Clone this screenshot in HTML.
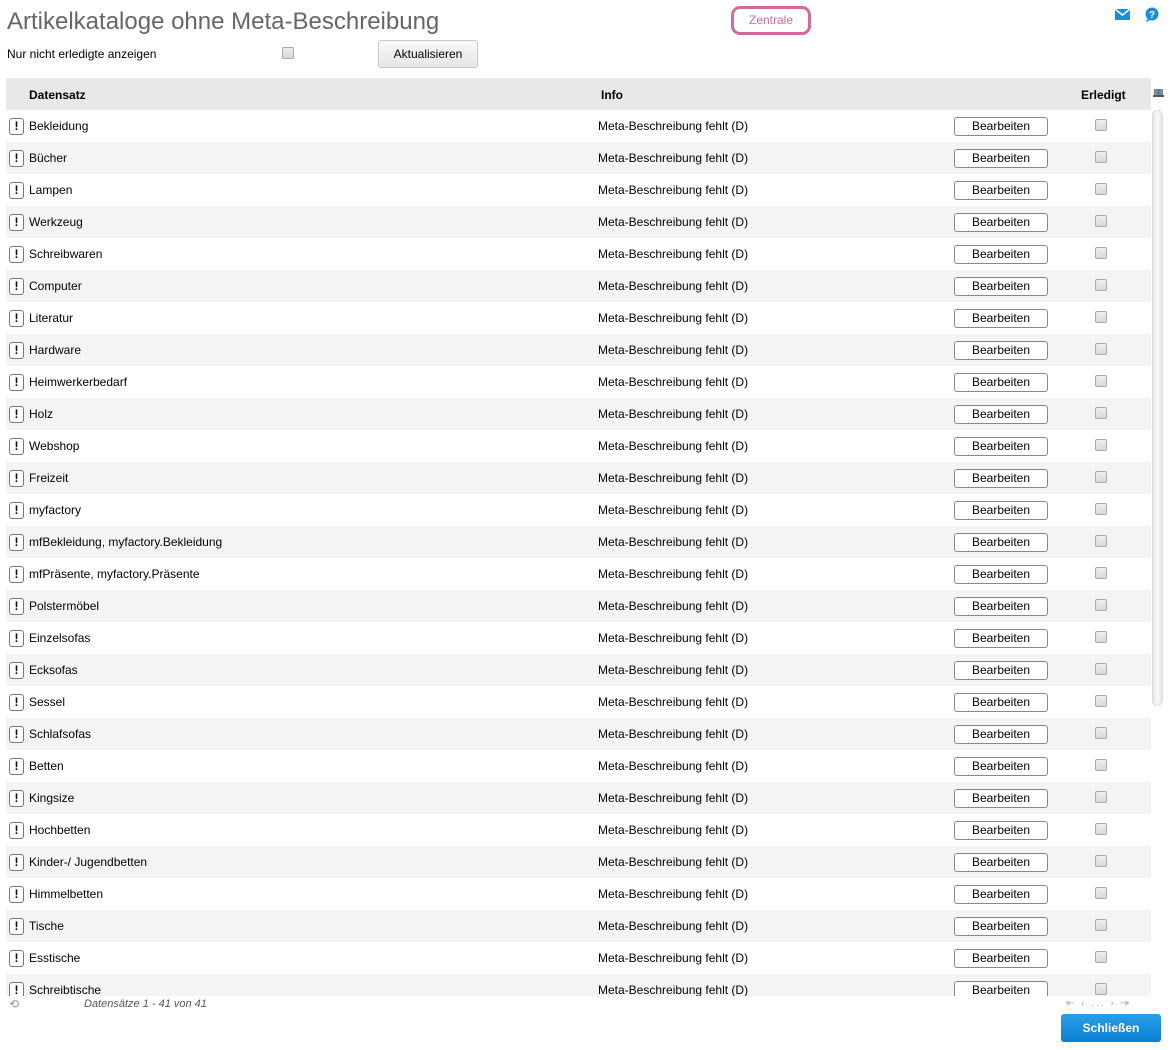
<!DOCTYPE html>
<html><head><meta charset="utf-8"><style>
*{box-sizing:border-box;margin:0;padding:0}
body{width:1176px;height:1050px;background:#fff;font-family:"Liberation Sans",Arial,sans-serif;font-size:12px;color:#000;position:relative;overflow:hidden}
.abs{position:absolute}
h1{position:absolute;left:7px;top:8px;font-size:24px;font-weight:normal;color:#666;letter-spacing:0}
.zen{left:731px;top:6px;width:80px;height:29px;border:3px solid #d06a9c;border-radius:9px;color:#d06a9c;text-align:center;line-height:23px;font-size:12px}
.cb{width:12px;height:12px;border:1px solid #aaa;border-radius:2px;background:linear-gradient(#eee,#d8d8d8)}
.akt{left:378px;top:40px;width:100px;height:28px;border:1px solid #c8c8c8;border-radius:3px;background:linear-gradient(#f8f8f8,#e6e6e6);text-align:center;line-height:26px}
.hdr{left:6px;top:78px;width:1145px;height:32px;background:#e8e8e8;font-weight:bold}
.hdr span{position:absolute;top:10px}
#rows{left:6px;top:110px;width:1145px;height:886px;overflow:hidden}
.r{position:relative;height:32px}
.r:nth-child(even){background:#f4f4f4}
.r .i{position:absolute;left:3px;top:8px;width:15px;height:17px;border:1px solid #777;border-radius:3px;background:#fff;font-weight:bold;text-align:center;line-height:15px;font-size:12px}
.r .n{position:absolute;left:23px;top:9px}
.r .f{position:absolute;left:592px;top:9px}
.r .b{position:absolute;left:948px;top:7px;width:94px;height:19px;border:1px solid #888;border-radius:3px;background:#fff;text-align:center;line-height:17px}
.r .cb{position:absolute;left:1089px;top:9px}
.sb{left:1152px;top:110px;width:11px;height:596px;border-radius:6px;background:linear-gradient(90deg,#e6e6e6,#fafafa,#e6e6e6);border:1px solid #ddd}
.sch{left:1061px;top:1014px;width:100px;height:28px;background:linear-gradient(#2a9ee6,#0a7fd0);border-radius:3px;color:#fff;font-weight:bold;text-align:center;line-height:28px}
</style></head><body>
<h1>Artikelkataloge ohne Meta-Beschreibung</h1>
<div class="abs zen">Zentrale</div>
<svg class="abs" style="left:1115px;top:9px" width="15" height="11" viewBox="0 0 15 11"><rect width="15" height="11" fill="#1a8fd8"/><path d="M0 0L7.5 6L15 0" stroke="#fff" stroke-width="1.5" fill="none"/></svg>
<svg class="abs" style="left:1144px;top:7px" width="16" height="16" viewBox="0 0 16 16"><circle cx="8" cy="7" r="6.5" fill="#1a8fd8"/><path d="M3 12L2 15L6 13Z" fill="#1a8fd8"/><text x="8" y="11" font-size="10" font-weight="bold" fill="#fff" text-anchor="middle" font-family="Liberation Sans">?</text></svg>
<div class="abs" style="left:7px;top:47px">Nur nicht erledigte anzeigen</div>
<div class="abs cb" style="left:282px;top:47px"></div>
<div class="abs akt">Aktualisieren</div>
<div class="abs hdr"><span style="left:23px">Datensatz</span><span style="left:595px">Info</span><span style="left:1075px">Erledigt</span></div>
<svg class="abs" style="left:1153px;top:88px" width="11" height="10" viewBox="0 0 11 10"><rect x="0" y="7" width="11" height="2" fill="#555"/><rect x="1" y="1" width="9" height="6" fill="#888"/><path d="M5.5 1L5.5 7" stroke="#1a8fd8" stroke-width="2"/></svg>
<div class="abs" id="rows">
<div class="r"><div class="i">!</div><div class="n">Bekleidung</div><div class="f">Meta-Beschreibung fehlt (D)</div><div class="b">Bearbeiten</div><div class="cb"></div></div>
<div class="r"><div class="i">!</div><div class="n">Bücher</div><div class="f">Meta-Beschreibung fehlt (D)</div><div class="b">Bearbeiten</div><div class="cb"></div></div>
<div class="r"><div class="i">!</div><div class="n">Lampen</div><div class="f">Meta-Beschreibung fehlt (D)</div><div class="b">Bearbeiten</div><div class="cb"></div></div>
<div class="r"><div class="i">!</div><div class="n">Werkzeug</div><div class="f">Meta-Beschreibung fehlt (D)</div><div class="b">Bearbeiten</div><div class="cb"></div></div>
<div class="r"><div class="i">!</div><div class="n">Schreibwaren</div><div class="f">Meta-Beschreibung fehlt (D)</div><div class="b">Bearbeiten</div><div class="cb"></div></div>
<div class="r"><div class="i">!</div><div class="n">Computer</div><div class="f">Meta-Beschreibung fehlt (D)</div><div class="b">Bearbeiten</div><div class="cb"></div></div>
<div class="r"><div class="i">!</div><div class="n">Literatur</div><div class="f">Meta-Beschreibung fehlt (D)</div><div class="b">Bearbeiten</div><div class="cb"></div></div>
<div class="r"><div class="i">!</div><div class="n">Hardware</div><div class="f">Meta-Beschreibung fehlt (D)</div><div class="b">Bearbeiten</div><div class="cb"></div></div>
<div class="r"><div class="i">!</div><div class="n">Heimwerkerbedarf</div><div class="f">Meta-Beschreibung fehlt (D)</div><div class="b">Bearbeiten</div><div class="cb"></div></div>
<div class="r"><div class="i">!</div><div class="n">Holz</div><div class="f">Meta-Beschreibung fehlt (D)</div><div class="b">Bearbeiten</div><div class="cb"></div></div>
<div class="r"><div class="i">!</div><div class="n">Webshop</div><div class="f">Meta-Beschreibung fehlt (D)</div><div class="b">Bearbeiten</div><div class="cb"></div></div>
<div class="r"><div class="i">!</div><div class="n">Freizeit</div><div class="f">Meta-Beschreibung fehlt (D)</div><div class="b">Bearbeiten</div><div class="cb"></div></div>
<div class="r"><div class="i">!</div><div class="n">myfactory</div><div class="f">Meta-Beschreibung fehlt (D)</div><div class="b">Bearbeiten</div><div class="cb"></div></div>
<div class="r"><div class="i">!</div><div class="n">mfBekleidung, myfactory.Bekleidung</div><div class="f">Meta-Beschreibung fehlt (D)</div><div class="b">Bearbeiten</div><div class="cb"></div></div>
<div class="r"><div class="i">!</div><div class="n">mfPräsente, myfactory.Präsente</div><div class="f">Meta-Beschreibung fehlt (D)</div><div class="b">Bearbeiten</div><div class="cb"></div></div>
<div class="r"><div class="i">!</div><div class="n">Polstermöbel</div><div class="f">Meta-Beschreibung fehlt (D)</div><div class="b">Bearbeiten</div><div class="cb"></div></div>
<div class="r"><div class="i">!</div><div class="n">Einzelsofas</div><div class="f">Meta-Beschreibung fehlt (D)</div><div class="b">Bearbeiten</div><div class="cb"></div></div>
<div class="r"><div class="i">!</div><div class="n">Ecksofas</div><div class="f">Meta-Beschreibung fehlt (D)</div><div class="b">Bearbeiten</div><div class="cb"></div></div>
<div class="r"><div class="i">!</div><div class="n">Sessel</div><div class="f">Meta-Beschreibung fehlt (D)</div><div class="b">Bearbeiten</div><div class="cb"></div></div>
<div class="r"><div class="i">!</div><div class="n">Schlafsofas</div><div class="f">Meta-Beschreibung fehlt (D)</div><div class="b">Bearbeiten</div><div class="cb"></div></div>
<div class="r"><div class="i">!</div><div class="n">Betten</div><div class="f">Meta-Beschreibung fehlt (D)</div><div class="b">Bearbeiten</div><div class="cb"></div></div>
<div class="r"><div class="i">!</div><div class="n">Kingsize</div><div class="f">Meta-Beschreibung fehlt (D)</div><div class="b">Bearbeiten</div><div class="cb"></div></div>
<div class="r"><div class="i">!</div><div class="n">Hochbetten</div><div class="f">Meta-Beschreibung fehlt (D)</div><div class="b">Bearbeiten</div><div class="cb"></div></div>
<div class="r"><div class="i">!</div><div class="n">Kinder-/ Jugendbetten</div><div class="f">Meta-Beschreibung fehlt (D)</div><div class="b">Bearbeiten</div><div class="cb"></div></div>
<div class="r"><div class="i">!</div><div class="n">Himmelbetten</div><div class="f">Meta-Beschreibung fehlt (D)</div><div class="b">Bearbeiten</div><div class="cb"></div></div>
<div class="r"><div class="i">!</div><div class="n">Tische</div><div class="f">Meta-Beschreibung fehlt (D)</div><div class="b">Bearbeiten</div><div class="cb"></div></div>
<div class="r"><div class="i">!</div><div class="n">Esstische</div><div class="f">Meta-Beschreibung fehlt (D)</div><div class="b">Bearbeiten</div><div class="cb"></div></div>
<div class="r"><div class="i">!</div><div class="n">Schreibtische</div><div class="f">Meta-Beschreibung fehlt (D)</div><div class="b">Bearbeiten</div><div class="cb"></div></div>
</div>
<div class="abs sb"></div>
<div class="abs" style="left:9px;top:997px;color:#999;font-size:12px">⟲</div>
<div class="abs" style="left:84px;top:998px;color:#555;font-style:italic;font-size:11px">Datensätze 1 - 41 von 41</div>
<div class="abs" style="left:1066px;top:998px;color:#aaa;font-size:10px;letter-spacing:2px">⇤ ‹ ... › ⇥</div>
<div class="abs sch">Schließen</div>
</body></html>
